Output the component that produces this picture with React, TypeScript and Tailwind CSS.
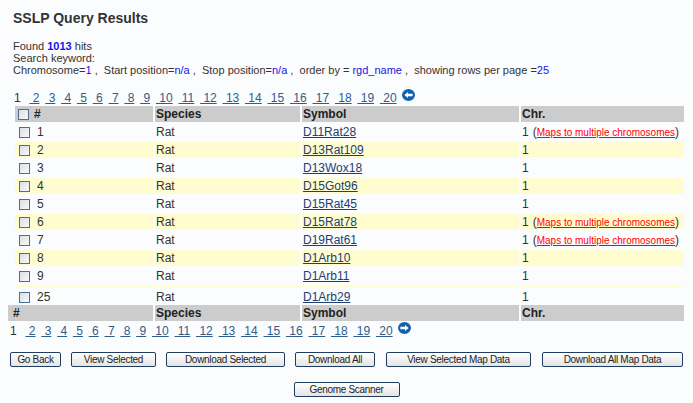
import React from 'react';

type Row = { n: number; symbol: string; multi?: boolean; alt?: boolean };

const rows: Row[] = [
  { n: 1, symbol: 'D11Rat28', multi: true },
  { n: 2, symbol: 'D13Rat109', alt: true },
  { n: 3, symbol: 'D13Wox18' },
  { n: 4, symbol: 'D15Got96', alt: true },
  { n: 5, symbol: 'D15Rat45' },
  { n: 6, symbol: 'D15Rat78', multi: true, alt: true },
  { n: 7, symbol: 'D19Rat61', multi: true },
  { n: 8, symbol: 'D1Arb10', alt: true },
  { n: 9, symbol: 'D1Arb11' },
];

const pages = [2, 3, 4, 5, 6, 7, 8, 9, 10, 11, 12, 13, 14, 15, 16, 17, 18, 19, 20];

function ArrowIcon({ dir }: { dir: 'left' | 'right' }) {
  const pts =
    dir === 'left'
      ? '2.4,6 6,2.9 6,4.7 10.6,4.7 10.6,7.3 6,7.3 6,9.1'
      : '10.6,6 7,2.9 7,4.7 2.4,4.7 2.4,7.3 7,7.3 7,9.1';
  return (
    <svg width="13" height="12" viewBox="0 0 13 12" className="block">
      <ellipse cx="6.5" cy="6" rx="6.5" ry="6" fill="#1462ab" />
      <polygon points={pts} fill="#fff" />
    </svg>
  );
}

function Pager({ dir, className }: { dir: 'left' | 'right'; className: string }) {
  return (
    <div className={`flex items-start h-[14px] text-[12px] leading-[14px] ${className}`}>
      <span className="text-[#333] mr-[3px]">1</span>
      {pages.map((p) => (
        <a key={p} href="#" className="ml-[5.8px] text-[#2f5c8c] underline underline-offset-1">
          {'\u00a0' + p}
        </a>
      ))}
      <span className="ml-[5px] mt-[-2px]">
        <ArrowIcon dir={dir} />
      </span>
    </div>
  );
}

function Box() {
  return (
    <span className="block w-[11px] h-[11px] border border-[#4b7098] bg-linear-to-br from-[#dcdfe3] to-[#f7f8f9]" />
  );
}

const grid = 'grid grid-cols-[138px_145px_217px_163px] gap-x-[2px]';

function Head({ foot }: { foot?: boolean }) {
  const cell = 'bg-[#cccccc] h-[16px] flex items-center font-bold text-[#222] pl-[1px]';
  return (
    <div
      className={
        foot
          ? 'grid grid-cols-[145px_145px_217px_163px] gap-x-[2px] ml-[8px]'
          : grid
      }
    >
      <div className={cell}>
        {foot ? (
          <span className="ml-[4px]">#</span>
        ) : (
          <>
            <span className="ml-[2px]">
              <Box />
            </span>
            <span className="ml-[5px]">#</span>
          </>
        )}
      </div>
      <div className={cell}>Species</div>
      <div className={cell}>Symbol</div>
      <div className={cell}>Chr.</div>
    </div>
  );
}

function DataRow({ r }: { r: Row }) {
  const cell = `h-[16px] flex items-center pl-[1px] ${r.alt ? 'bg-[#fffdd0]' : ''}`;
  return (
    <div className={grid}>
      <div className={cell}>
        <span className="ml-[3px]">
          <Box />
        </span>
        <span className="ml-[7px]">{r.n}</span>
      </div>
      <div className={cell}>Rat</div>
      <div className={cell}>
        <a href="#" className="text-[#21406f] underline underline-offset-1">
          {r.symbol}
        </a>
      </div>
      <div className={cell}>
        1
        {r.multi && (
          <span className="ml-[4px]">
            (
            <a href="#" className="text-[10px] text-[#ff0000] underline underline-offset-1">
              Maps to multiple chromosomes
            </a>
            )
          </span>
        )}
      </div>
    </div>
  );
}

function Btn({ label, w, className = '' }: { label: string; w: string; className?: string }) {
  return (
    <button
      className={`${w} h-[15px] border border-[#1f3c61] rounded-[2px] bg-linear-to-b from-white to-[#e4e4e4] text-[10px] leading-[13px] tracking-[-0.3px] text-[#222] ${className}`}
    >
      {label}
    </button>
  );
}

export default function App() {
  const blue = 'text-[#1515e6]';
  return (
    <div className="min-h-screen bg-[#fbfcfe] text-[#333] font-['Liberation_Sans',Arial,sans-serif]">
      <h1 className="pt-[10px] pl-[13px] text-[14px] leading-[16px] font-bold text-[#333]">
        SSLP Query Results
      </h1>

      <div className="mt-[14px] pl-[13px] text-[11px] leading-[12px]">
        <div>
          Found <b className={blue}>1013</b> hits
        </div>
        <div>Search keyword:</div>
        <div className="whitespace-nowrap">
          Chromosome=<span className={blue}>1</span>
          {'\u00a0,\u00a0\u00a0'}Start position=<span className={blue}>n/a</span>
          {'\u00a0,\u00a0\u00a0'}Stop position=<span className={blue}>n/a</span>
          {'\u00a0,\u00a0\u00a0'}order by = <span className={blue}>rgd_name</span>
          {'\u00a0,\u00a0\u00a0'}showing rows per page =<span className={blue}>25</span>
        </div>
      </div>

      <Pager dir="left" className="mt-[15px] pl-[14px]" />

      <div className="mt-[1px] text-[12px] ml-[15px] flex flex-col gap-y-[2px]">
        <Head />
        {rows.map((r) => (
          <DataRow key={r.n} r={r} />
        ))}
        <div className={grid}>
          <div className="h-[1px] bg-[#fffdd0]" />
          <div className="h-[1px] bg-[#fffdd0]" />
          <div className="h-[1px] bg-[#fffdd0]" />
          <div className="h-[1px] bg-[#fffdd0]" />
        </div>
        <DataRow r={{ n: 25, symbol: 'D1Arb29' }} />
      </div>
      <div className="text-[12px]">
        <Head foot />
      </div>

      <Pager dir="right" className="mt-[3px] pl-[10px]" />

      <div className="mt-[14px] ml-[10px] flex gap-[10px]">
        <Btn label="Go Back" w="w-[51px]" />
        <Btn label="View Selected" w="w-[85px]" />
        <Btn label="Download Selected" w="w-[119px]" />
        <Btn label="Download All" w="w-[80px]" />
        <Btn label="View Selected Map Data" w="w-[145px]" className="ml-[1px]" />
        <Btn label="Download All Map Data" w="w-[141px]" className="ml-[1px]" />
      </div>
      <div className="mt-[15px] flex justify-center">
        <Btn label="Genome Scanner" w="w-[106px]" />
      </div>
    </div>
  );
}
